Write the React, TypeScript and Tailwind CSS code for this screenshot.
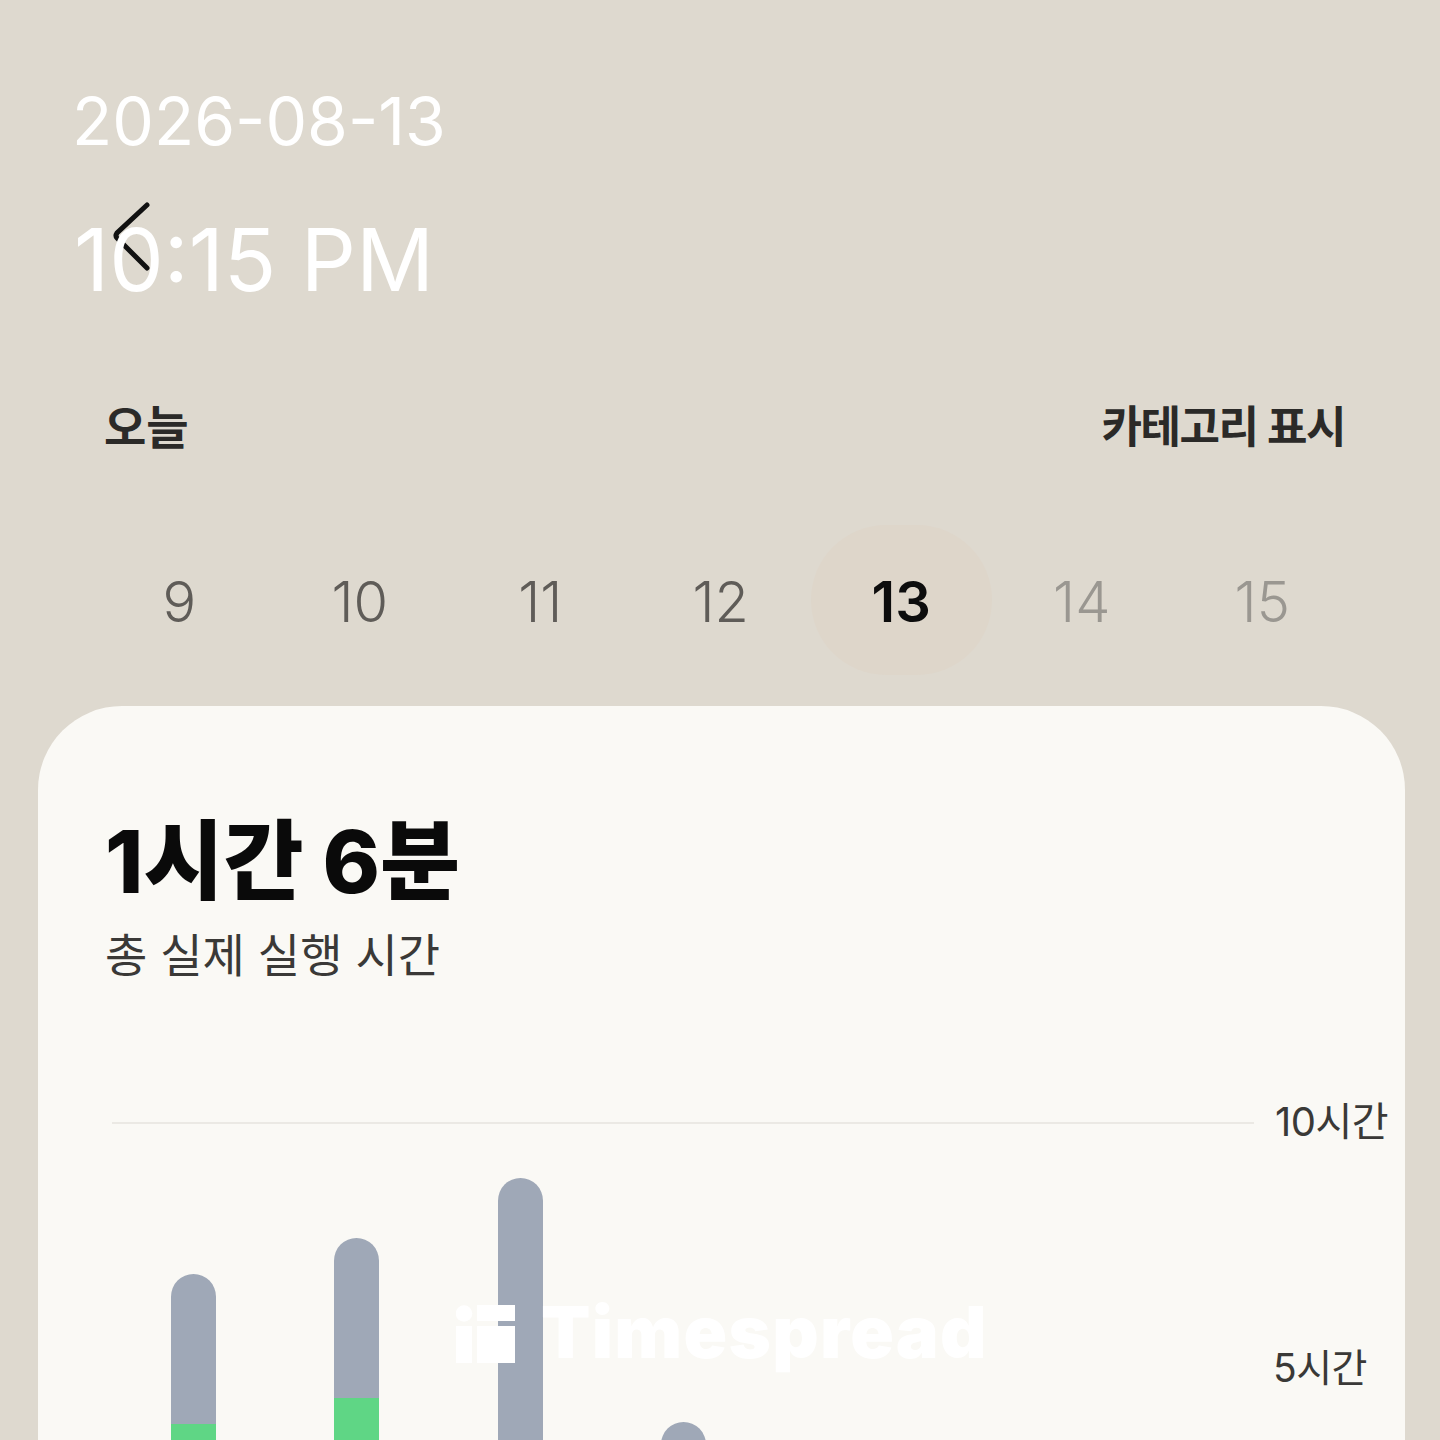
const DAYS = [
  { n: '9', c: 'text-[#5f5c58] font-[350]' },
  { n: '10', c: 'text-[#5f5c58] font-[350]' },
  { n: '11', c: 'text-[#5f5c58] font-[350]' },
  { n: '12', c: 'text-[#5f5c58] font-[350]' },
  { n: '13', c: 'text-[#0d0d0d] font-semibold bg-[#ded6ca]' },
  { n: '14', c: 'text-[#9a9791] font-[350]' },
  { n: '15', c: 'text-[#9a9791] font-[350]' },
]

// top = offset from tallest bar, gray/green = segment heights (bars run off the page)
const BARS = [
  { top: 96, gray: 150, green: 20 },
  { top: 60, gray: 160, green: 50 },
  { top: 0, gray: 270, green: 0 },
  { top: 244, gray: 30, green: 0 },
]

export default function App() {
  return (
    <div className="relative w-[1440px] h-[1440px] overflow-hidden bg-[#ded9cf] font-['Inter','Noto_Sans_CJK_KR',sans-serif]">
      <StatusOverlay />
      <div className="h-[397px]" />
      <div className="flex justify-between pl-[104px] pr-[95px] leading-[60px] font-semibold text-[#2b2a28]">
        <span className="text-[46px]">오늘</span>
        <span className="text-[44px] tracking-[-1.5px]">카테고리 표시</span>
      </div>
      <div className="mt-[68px] ml-[89px] flex">
        {DAYS.map((d) => (
          <div key={d.n} className={`w-[180.5px] h-[150px] rounded-[75px] flex items-center justify-center pt-[4px] text-[56px] ${d.c}`}>
            {d.n}
          </div>
        ))}
      </div>
      <Card />
      <Watermark />
    </div>
  )
}

function StatusOverlay() {
  return (
    <>
      <div className="absolute left-[72px] top-[81px] text-[66px] leading-[80px] text-white">2026-08-13</div>
      <svg className="absolute left-[110px] top-[198px]" width="44" height="78" viewBox="0 0 44 78" fill="none">
        <path d="M37 7 L7 35 Q5 38 7 40 L37 70" stroke="#111" strokeWidth="5" strokeLinecap="round" />
      </svg>
      <div className="absolute left-[74px] top-[205px] text-[86.5px] leading-[110px] text-white">10:15 PM</div>
    </>
  )
}

function Card() {
  return (
    <div className="mt-[31px] mx-[38px] w-[1367px] h-[800px] rounded-t-[84px] bg-[#faf9f5] pt-[110px] pl-[67px]">
      <div className="text-[87px] leading-[92px] font-extrabold text-[#0a0a0a]">1시간 6분</div>
      <div className="mt-[17px] text-[46px] leading-[60px] text-[#3a3937]">총 실제 실행 시간</div>
      <Chart />
    </div>
  )
}

function Chart() {
  return (
    <div className="relative mt-[113px] ml-[7px]">
      <div className="flex items-center">
        <div className="w-[1142px] h-[2px] mt-[4px] bg-[#ebe9e4]" />
        <span className="ml-[21px] pt-[2px] text-[40px] leading-[44px] tracking-[-0.5px] text-[#3a3937]">10시간</span>
      </div>
      <div className="absolute left-[59px] top-[80px] flex gap-[118.4px]">
        {BARS.map((b, i) => (
          <Bar key={i} top={b.top} gray={b.gray} green={b.green} />
        ))}
      </div>
      <div className="absolute left-[1161px] top-[248px] text-[39px] leading-[44px] tracking-[-0.5px] text-[#3a3937]">5시간</div>
    </div>
  )
}

function Bar({ top, gray, green }: { top: number; gray: number; green: number }) {
  return (
    <div className="w-[45px] flex flex-col rounded-t-[23px] overflow-hidden" style={{ marginTop: top }}>
      <div className="bg-[#9fa8b7]" style={{ height: gray }} />
      <div className="bg-[#5fd685]" style={{ height: green }} />
    </div>
  )
}

function Watermark() {
  return (
    <div className="absolute left-[456px] top-[1290px] flex items-center gap-[26px] text-white">
      <svg className="mt-[4px]" width="59" height="58" viewBox="0 0 59 58" fill="#fff">
        <circle cx="8" cy="8.5" r="8.3" />
        <rect x="0" y="21" width="16" height="37" />
        <rect x="21" y="0" width="38" height="16" />
        <rect x="21" y="21" width="38" height="37" />
      </svg>
      <span className="text-[72px] leading-[84px] font-black tracking-[1.3px]">Timespread</span>
    </div>
  )
}
